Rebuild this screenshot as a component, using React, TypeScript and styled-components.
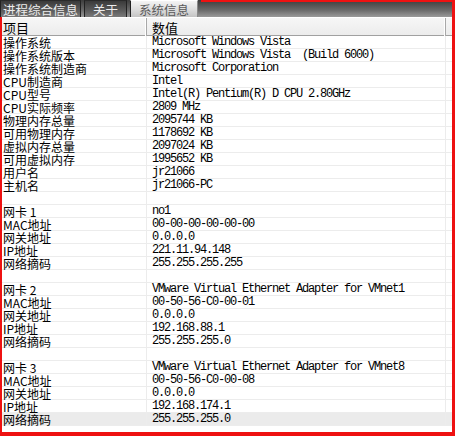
import { styled, createGlobalStyle } from "styled-components";

const GlobalStyle = createGlobalStyle`
  html, body {
    margin: 0;
    padding: 0;
    background: #ffffff;
  }
`;

type Item = { label: string; value: string };

const rows: Item[] = [
  { label: "操作系统", value: "Microsoft Windows Vista" },
  { label: "操作系统版本", value: "Microsoft Windows Vista  (Build 6000)" },
  { label: "操作系统制造商", value: "Microsoft Corporation" },
  { label: "CPU制造商", value: "Intel" },
  { label: "CPU型号", value: "Intel(R) Pentium(R) D CPU 2.80GHz" },
  { label: "CPU实际频率", value: "2809 MHz" },
  { label: "物理内存总量", value: "2095744 KB" },
  { label: "可用物理内存", value: "1178692 KB" },
  { label: "虚拟内存总量", value: "2097024 KB" },
  { label: "可用虚拟内存", value: "1995652 KB" },
  { label: "用户名", value: "jr21066" },
  { label: "主机名", value: "jr21066-PC" },
  { label: "", value: "" },
  { label: "网卡 1", value: "no1" },
  { label: "MAC地址", value: "00-00-00-00-00-00" },
  { label: "网关地址", value: "0.0.0.0" },
  { label: "IP地址", value: "221.11.94.148" },
  { label: "网络摘码", value: "255.255.255.255" },
  { label: "", value: "" },
  { label: "网卡 2", value: "VMware Virtual Ethernet Adapter for VMnet1" },
  { label: "MAC地址", value: "00-50-56-C0-00-01" },
  { label: "网关地址", value: "0.0.0.0" },
  { label: "IP地址", value: "192.168.88.1" },
  { label: "网络摘码", value: "255.255.255.0" },
  { label: "", value: "" },
  { label: "网卡 3", value: "VMware Virtual Ethernet Adapter for VMnet8" },
  { label: "MAC地址", value: "00-50-56-C0-00-08" },
  { label: "网关地址", value: "0.0.0.0" },
  { label: "IP地址", value: "192.168.174.1" },
  { label: "网络摘码", value: "255.255.255.0" },
];

const tabs = ["进程综合信息", "关于", "系统信息"];

const App = () => {
  return (
    <>
      <GlobalStyle />
      <St.Frame>
        <St.TabBar>
          {tabs.map((t, i) => (
            <St.Tab key={t} $active={i === 2} $first={i === 0}>
              {t}
            </St.Tab>
          ))}
          <St.TabFill />
        </St.TabBar>
        <St.Panel>
          <St.Header>
            <St.HeadCell>项目</St.HeadCell>
            <St.HeadCell $value>数值</St.HeadCell>
            <St.HeadCell />
          </St.Header>
          {rows.map((r, i) => (
            <St.Row key={i} $selected={i === rows.length - 1}>
              <St.Label>{r.label}</St.Label>
              <St.Value>{r.value}</St.Value>
              <St.Tail />
            </St.Row>
          ))}
        </St.Panel>
      </St.Frame>
    </>
  );
};

export default App;

const cjk = `"Noto Sans CJK SC", "Noto Sans", sans-serif`;

const St = {
  Frame: styled.div`
    width: 455px;
    height: 436px;
    display: flex;
    flex-direction: column;
    box-sizing: border-box;
    overflow: hidden;
  `,
  TabBar: styled.div`
    display: flex;
    height: 17px;
    flex: none;
    background: linear-gradient(#3c3c3c, #6a6a6a 60%, #9a9a9a);
    border-right: 3px solid #ee1111;
  `,
  Tab: styled.div<{ $active?: boolean; $first?: boolean }>`
    display: flex;
    align-items: center;
    justify-content: center;
    height: 17px;
    box-sizing: border-box;
    padding: 0 ${(p) => (p.$first ? "2px" : "8px")};
    margin-right: 3px;
    font-family: ${cjk};
    font-size: 12.5px;
    line-height: 13px;
    color: ${(p) => (p.$active ? "#5a5a5a" : "#ececec")};
    background: ${(p) =>
      p.$active
        ? "linear-gradient(#f4f4f4, #dcdcdc 55%, #c4c4c4)"
        : "linear-gradient(#3a3a3a, #5c5c5c 60%, #7a7a7a)"};
    border-left: 1px solid #222222;
    border-right: 1px solid ${(p) => (p.$active ? "#8a8a8a" : "#222222")};
    border-top: 1px solid ${(p) => (p.$active ? "#ffffff" : "#2a2a2a")};
  `,
  TabFill: styled.div`
    flex: 1;
    border-top: 2px solid #ee1111;
  `,
  Panel: styled.div`
    flex: 1;
    display: flex;
    flex-direction: column;
    border-left: 2px solid #ee1111;
    border-right: 3px solid #ee1111;
    border-bottom: 4px solid #ee1111;
    background: #ffffff;
  `,
  Header: styled.div`
    display: grid;
    grid-template-columns: 145px 299px 1fr;
    height: 19px;
    box-sizing: border-box;
    border-top: 1px solid #ffffff;
    border-bottom: 1px solid #a0a0a0;
    background: linear-gradient(#f6f6f6, #ececec);
  `,
  HeadCell: styled.div<{ $value?: boolean }>`
    display: flex;
    align-items: center;
    padding-left: ${(p) => (p.$value ? "5px" : "1px")};
    font-family: ${cjk};
    font-size: 13px;
    color: #000000;
    border-right: 1px solid #a8a8a8;
    box-shadow: inset -1px 0 0 #ffffff;
    &:last-child {
      border-right: none;
      box-shadow: none;
    }
  `,
  Row: styled.div<{ $selected?: boolean }>`
    display: grid;
    grid-template-columns: 145px 299px 1fr;
    height: 13px;
    box-sizing: border-box;
    border-bottom: 1px solid #ececec;
    background: ${(p) => (p.$selected ? "#ebebeb" : "transparent")};
  `,
  Label: styled.div`
    padding-left: 1px;
    font-family: ${cjk};
    font-size: 12px;
    line-height: 13px;
    color: #000000;
    white-space: nowrap;
    border-right: 1px solid #ececec;
  `,
  Value: styled.div`
    padding-left: 5px;
    font-family: "Liberation Mono", monospace;
    font-size: 12px;
    letter-spacing: -1.2px;
    line-height: 13px;
    color: #000000;
    white-space: pre;
    border-right: 1px solid #ececec;
  `,
  Tail: styled.div``,
};
